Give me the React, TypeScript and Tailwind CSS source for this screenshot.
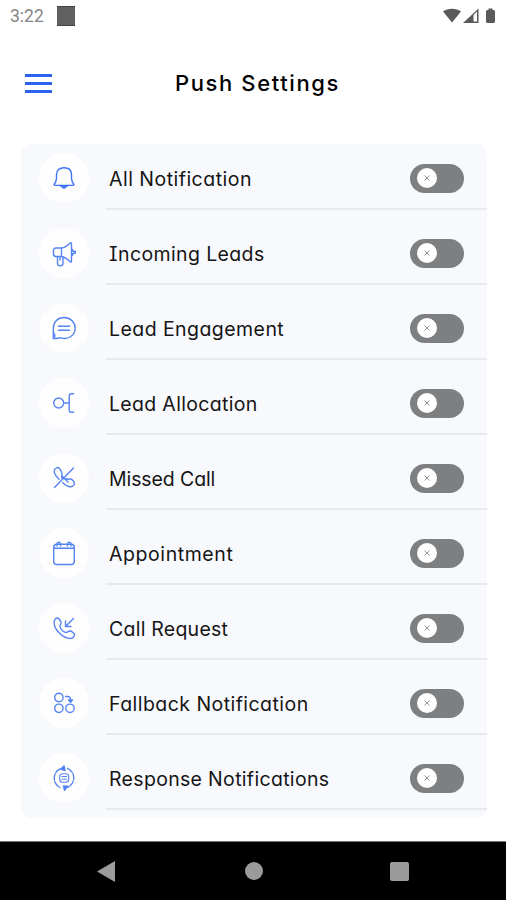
import type { ReactNode } from "react";

function Icon({ children }: { children: ReactNode }) {
  return (
    <svg
      width="24"
      height="28"
      viewBox="0 0 24 28"
      fill="none"
      stroke="#5584f2"
      strokeWidth="1.4"
      strokeLinecap="round"
      strokeLinejoin="round"
    >
      {children}
    </svg>
  );
}

const bell = (
  <Icon>
    <path stroke="#3f74f0" d="M2 20.500C4 18.500 4.500 17 4.500 14V10.500C4.500 6.200 7.500 3.800 12 3.800s7.500 2.400 7.500 6.700V14c0 3 .5 4.500 2.500 6.500-.3.900-1 .9-2 .9H4c-1 0-1.700 0-2-.9Z" />
    <path stroke="#3f74f0" d="M8.500 21.500c.4 1.500 1.300 1.300 2 1.500.4 1.500 2.600 1.500 3 0 .7-.2 1.600 0 2-1.500M11 22.500h2" />
  </Icon>
);

const megaphone = (
  <Icon>
    <path d="M9.500 9H4C2.500 9 1.500 10.200 1.500 11.500V15C1.500 16.500 2.500 17.500 4 17.500h5.500ZM9.500 9c3.500-.5 6-2.500 8.500-4.800 1-.8 1.500-.4 1.500.6v17.400c0 1-.7 1-1.500.4-2.300-2.300-5-4.600-8.500-5.100M19.500 10c1.500.2 1.500 1.500 1.500 2.300h2.300v2H21c0 1 0 2.300-1.500 2.500M5.500 17.500v7c0 3 5.500 3 5.500 0v-6.500M8 17.500V21" />
  </Icon>
);

const chat = (
  <Icon>
    <path d="M1.300 24.500V14.200C1.300 8 6 3.500 12 3.500S23.200 8.200 23.200 14.200c0 7-7 12-14.200 9.700C7 23.200 6 24.800 1.300 24.500ZM1.500 18.500c1 1.500 2 2.500 1.300 4.500M6.500 12.200h11M6.500 16.200h11" />
  </Icon>
);

const allocation = (
  <Icon>
    <circle cx="6.700" cy="14" r="5" />
    <path d="M11.700 14H17M21.500 4.800H19.500C18 4.800 17.200 5.600 17.200 7v14c0 1.400.8 2.200 2.300 2.200h2" />
  </Icon>
);

const missedCall = (
  <Icon>
    <path d="M21.500 4 2.500 23.500M10.700 15.200C8.200 12.500 11 11.500 9.700 8.500 8.500 5.200 6.800 2.500 4.300 4 .5 6 2 10.500 7 15.200M14 14.700c2.500 1.500 3.500-.7 6 1 2.600 1.800 3 3.500 1.700 5.500-2.200 3-7 1.300-11-2.500M10 12l6 6" />
  </Icon>
);

const calendar = (
  <Icon>
    <rect x="1.700" y="5.200" width="20.600" height="20.300" rx="3" />
    <path d="M2 9.200h20M5 7V5c0-2.400 3.500-2.400 3.500 0V7M15.500 7V5c0-2.400 3.500-2.400 3.500 0V7" />
  </Icon>
);

const incomingCall = (
  <Icon>
    <path d="M2.200 7.500C2.500 5.500 4 3.800 5.500 4c1.700.2 3 3 3.500 4.300.7 2-1.500 2.700-1 4.300.8 2.500 3.600 5.200 6 5.900 1.500.4 2.200-2 4.300-1.500 1.500.4 4.200 2.200 4.200 3.700 0 2-2 3.800-4 3.800C11 24.500 1 15 2.200 7.500ZM21.500 4.500l-8 8M13.500 7v5.500h5.500" />
  </Icon>
);

const fallback = (
  <Icon>
    <circle cx="6.900" cy="8.500" r="4.200" />
    <circle cx="6.900" cy="19.300" r="4.200" />
    <circle cx="18" cy="19.300" r="4.200" />
    <path d="M13.500 7.500h2c2 0 3 1 3 3v1" />
    <path fill="#5584f2" d="M16.500 11h4l-2 2.200Z" />
  </Icon>
);

const response = (
  <Icon>
    <path strokeDasharray="6 1.500" d="M8 4.800A10.500 10.500 0 0 0 8 23.500M15.500 4.300a10.500 10.500 0 0 1 .5 19" />
    <path fill="#4478f0" d="M12 2 8.500 5.200 13 6.500ZM12.500 26.300l3.300-4-4.300-.3Z" />
    <rect x="7.700" y="9.700" width="9" height="8.500" rx="3" strokeWidth="1.100" />
    <path strokeWidth="1" d="M10 12.500h4.500M10 15.200h4.500" />
  </Icon>
);

const settings = [
  { label: "All Notification", icon: bell, spacing: "tracking-[0.48px]" },
  { label: "Incoming Leads", icon: megaphone, spacing: "tracking-[0.38px]" },
  { label: "Lead Engagement", icon: chat, spacing: "tracking-[0.44px]" },
  { label: "Lead Allocation", icon: allocation, spacing: "tracking-[0.32px]" },
  { label: "Missed Call", icon: missedCall, spacing: "tracking-[-0.1px]" },
  { label: "Appointment", icon: calendar, spacing: "tracking-[0.58px]" },
  { label: "Call Request", icon: incomingCall, spacing: "tracking-[0.24px]" },
  { label: "Fallback Notification", icon: fallback, spacing: "tracking-[0.45px]" },
  { label: "Response Notifications", icon: response, spacing: "tracking-[0.32px]" },
];

function Toggle() {
  return (
    <button
      role="switch"
      aria-checked="false"
      className="flex h-[29px] w-[54px] items-center rounded-full bg-[#7d7f80] pl-[7px]"
    >
      <span className="flex size-5 items-center justify-center rounded-full bg-white">
        <svg width="6" height="6" viewBox="0 0 6 6" stroke="#888" strokeWidth="0.9">
          <path d="M.5.5l5 5M5.500.500l-5 5" />
        </svg>
      </span>
    </button>
  );
}

export default function App() {
  return (
    <div className="flex h-[900px] w-[506px] flex-col overflow-hidden bg-white font-['Inter',sans-serif] text-black">
      <header className="flex h-8 shrink-0 items-center justify-between pr-[9px] pl-[10px]">
        <div className="flex items-center gap-[13px]">
          <span className="w-[34px] whitespace-nowrap font-['Roboto',sans-serif] text-[17.500px] leading-8 text-[#858585]">3:22</span>
          <span className="h-5 w-[18px] border-y border-[#444] bg-[#606060]" />
        </div>
        <svg width="54" height="18" viewBox="0 0 54 18" fill="#5a5a5a">
          <path d="M0 4.500C5 .8 13 .8 18 4.500L9 15.500Z" />
          <path d="M20 16 35.500 1.500V16Z" />
          <path fill="#fff" d="M30.500 8 34 4.500v10h-3.500Z" />
          <path d="M45.500 3V1.500h4V3h1q1.500 0 1.500 1.500V14.500q0 1.500-1.500 1.500h-6q-1.500 0-1.500-1.500V4.500Q43 3 44.500 3Z" />
        </svg>
      </header>

      <div className="grid h-[112px] shrink-0 grid-cols-[1fr_auto_1fr] items-start px-[25px] pt-[35px]">
        <button aria-label="Menu" className="mt-[7px] flex w-[27px] flex-col gap-[5px]">
          <span className="h-[3px] bg-[#2b63ec]" />
          <span className="h-[3px] bg-[#2b63ec]" />
          <span className="h-[3px] bg-[#2b63ec]" />
        </button>
        <h1 className="ml-[9px] whitespace-nowrap text-[22px] leading-8 font-medium tracking-[1.600px]">Push Settings</h1>
      </div>

      <main className="mr-[19px] ml-[21px] h-[674px] shrink-0 rounded-[10px] bg-[#f8f9fd] pt-[9px]">
        <ul className="flex flex-col gap-[18px]">
          {settings.map((item) => (
            <li key={item.label} className="flex h-[57px] items-start pl-[18px]">
              <div className="flex size-[50px] items-center justify-center rounded-full bg-[#fefeff]">{item.icon}</div>
              <div className="ml-[17px] flex h-[57px] flex-1 items-center justify-between border-b-2 border-[#e7e9ee] pr-[23px] pb-[5px] pl-[3px]">
                <span
                  className={`whitespace-nowrap pt-[2px] text-[19.500px] leading-[48px] text-[#151515] [font-feature-settings:'cv08','cv11'] ${item.spacing}`}
                >
                  {item.label}
                </span>
                <Toggle />
              </div>
            </li>
          ))}
        </ul>
      </main>

      <nav className="mt-[23px] flex h-[59px] shrink-0 items-center border-t border-[#777] bg-black pl-[97px]">
        <svg width="18" height="21" viewBox="0 0 18 21" fill="#9b9b9b">
          <path d="M0 10.500 18 0v21Z" />
        </svg>
        <span className="ml-[130px] size-[18px] rounded-full bg-[#9b9b9b]" />
        <span className="ml-[127px] size-[19px] rounded-[2px] bg-[#9b9b9b]" />
      </nav>
    </div>
  );
}
